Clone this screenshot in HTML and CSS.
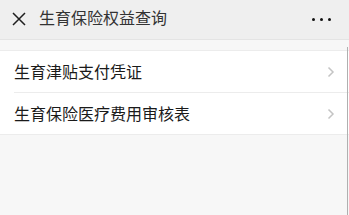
FILE: index.html
```html
<!DOCTYPE html>
<html lang="zh">
<head>
<meta charset="utf-8">
<link rel="stylesheet" href="styles.css">
</head>
<body>
<header class="nav">
  <svg class="close" width="14" height="14" viewBox="0 0 14 14"><path d="M1 1L13 13M13 1L1 13" stroke="#1f1f1f" stroke-width="1.5" fill="none"/></svg>
  <span class="title">生育保险权益查询</span>
  <span class="more"><i></i><i></i><i></i></span>
</header>
<main class="page">
  <ul class="list">
    <li class="row"><span>生育津贴支付凭证</span><svg class="chev" width="8" height="12" viewBox="0 0 8 12"><path d="M1.5 1.5L6 6L1.5 10.5" stroke="#c4c4c4" stroke-width="1.5" fill="none"/></svg></li>
    <li class="row"><span>生育保险医疗费用审核表</span><svg class="chev" width="8" height="12" viewBox="0 0 8 12"><path d="M1.5 1.5L6 6L1.5 10.5" stroke="#c4c4c4" stroke-width="1.5" fill="none"/></svg></li>
  </ul>
</main>
</body>
</html>
```
FILE: styles.css
```css
html, body {
  margin: 0;
  padding: 0;
  height: 100%;
}
body {
  background: #f7f7f7;
  font-family: "Noto Sans CJK SC", "Noto Sans", sans-serif;
  overflow: hidden;
  display: flex;
  flex-direction: column;
}
.nav {
  flex: none;
  height: 39px;
  border-bottom: 1px solid #e4e4e4;
  background: #efefef;
  display: flex;
  align-items: center;
  padding: 0 14px 0 12px;
}
.close {
  flex: none;
  margin-top: -1px;
}
.title {
  margin-left: 13px;
  font-size: 16px;
  color: #333;
  flex: 1;
  line-height: 1;
  margin-top: -6px;
}
.more {
  display: flex;
  gap: 5px;
  align-items: center;
  margin-right: 4px;
}
.more i {
  width: 3px;
  height: 3px;
  border-radius: 50%;
  background: #111;
  display: block;
}
.page {
  position: relative;
  padding-top: 10px;
  flex: 1;
  min-height: 0;
}
.page::after {
  content: "";
  position: absolute;
  right: 1px;
  top: 7px;
  bottom: 0;
  width: 1px;
  background: #b0b0b0;
}
.list {
  list-style: none;
  margin: 0;
  padding: 0;
  background: #fff;
  border-top: 1px solid #ececec;
  border-bottom: 1px solid #ececec;
}
.row {
  height: 41px;
  display: flex;
  align-items: center;
  justify-content: space-between;
  padding: 0 14px 0 0;
  margin-left: 14px;
  font-size: 16px;
  color: #1a1a1a;
}
.row + .row {
  border-top: 1px solid #ececec;
}
.row span {
  margin-top: -2px;
}
```
